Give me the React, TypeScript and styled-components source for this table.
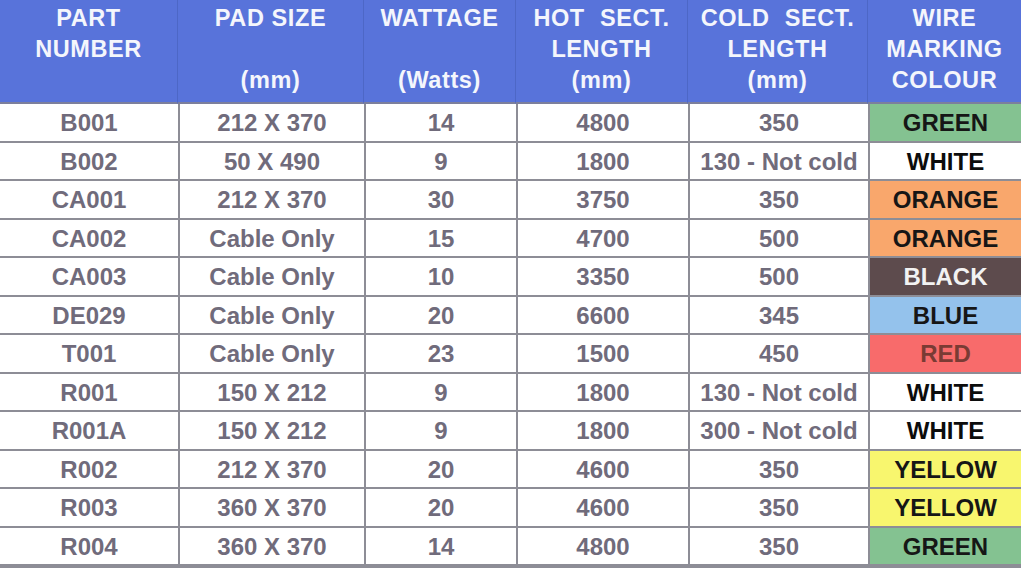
import React from "react";
import styled, { createGlobalStyle } from "styled-components";

const GlobalStyle = createGlobalStyle`
  html, body {
    margin: 0;
    padding: 0;
    background: #ffffff;
  }
  body {
    font-family: "Liberation Sans", Arial, sans-serif;
  }
`;

type WireColour = "GREEN" | "WHITE" | "ORANGE" | "BLACK" | "BLUE" | "RED" | "YELLOW";

type Row = {
  part: string;
  pad: string;
  watts: string;
  hot: string;
  cold: string;
  colour: WireColour;
};

const swatches: Record<WireColour, { bg: string; fg: string }> = {
  GREEN: { bg: "#84c291", fg: "#161616" },
  WHITE: { bg: "#ffffff", fg: "#0c0c0c" },
  ORANGE: { bg: "#f9a76c", fg: "#161616" },
  BLACK: { bg: "#5d4b4d", fg: "#f2f2f2" },
  BLUE: { bg: "#94c2ec", fg: "#161616" },
  RED: { bg: "#f86b6b", fg: "#7a3b34" },
  YELLOW: { bg: "#f8f66e", fg: "#161616" },
};

const rows: Row[] = [
  { part: "B001", pad: "212 X 370", watts: "14", hot: "4800", cold: "350", colour: "GREEN" },
  { part: "B002", pad: "50 X 490", watts: "9", hot: "1800", cold: "130 - Not cold", colour: "WHITE" },
  { part: "CA001", pad: "212 X 370", watts: "30", hot: "3750", cold: "350", colour: "ORANGE" },
  { part: "CA002", pad: "Cable Only", watts: "15", hot: "4700", cold: "500", colour: "ORANGE" },
  { part: "CA003", pad: "Cable Only", watts: "10", hot: "3350", cold: "500", colour: "BLACK" },
  { part: "DE029", pad: "Cable Only", watts: "20", hot: "6600", cold: "345", colour: "BLUE" },
  { part: "T001", pad: "Cable Only", watts: "23", hot: "1500", cold: "450", colour: "RED" },
  { part: "R001", pad: "150 X 212", watts: "9", hot: "1800", cold: "130 - Not cold", colour: "WHITE" },
  { part: "R001A", pad: "150 X 212", watts: "9", hot: "1800", cold: "300 - Not cold", colour: "WHITE" },
  { part: "R002", pad: "212 X 370", watts: "20", hot: "4600", cold: "350", colour: "YELLOW" },
  { part: "R003", pad: "360 X 370", watts: "20", hot: "4600", cold: "350", colour: "YELLOW" },
  { part: "R004", pad: "360 X 370", watts: "14", hot: "4800", cold: "350", colour: "GREEN" },
];

const columns = [178, 186, 152, 172, 180, 153];

const Sheet = styled.div`
  width: 1021px;
  display: grid;
  grid-template-columns: ${columns.map((c) => `${c}px`).join(" ")};
  grid-template-rows: 104px;
  grid-auto-rows: 38.5px;
  border-right: 2px solid #8d8d96;
  border-bottom: 2px solid #8d8d96;
  box-sizing: border-box;
`;

const HeadCell = styled.div<{ $last?: boolean; $wide?: boolean }>`
  background: #5873da;
  color: #f4f6fc;
  font-weight: bold;
  font-size: 23.5px;
  line-height: 31px;
  letter-spacing: 0.6px;
  word-spacing: ${(p) => (p.$wide ? "8px" : "0")};
  text-align: center;
  padding-top: 3px;
  box-sizing: border-box;
  border-right: ${(p) => (p.$last ? "none" : "1px solid #4d67c6")};
  border-bottom: 2px solid #7c7f9c;
`;

const Cell = styled.div<{ $bg?: string; $fg?: string; $first?: boolean }>`
  display: flex;
  align-items: center;
  justify-content: center;
  background: ${(p) => p.$bg ?? "#ffffff"};
  color: ${(p) => p.$fg ?? "#706b7b"};
  font-weight: bold;
  font-size: 24px;
  box-sizing: border-box;
  border-left: ${(p) => (p.$first ? "none" : "2px solid #8d8d96")};
  border-bottom: 2px solid #8d8d96;
  padding-top: 2px;
`;

export default function App() {
  return (
    <>
      <GlobalStyle />
      <Sheet>
        <HeadCell>PART<br />NUMBER</HeadCell>
        <HeadCell>PAD SIZE<br /><br />(mm)</HeadCell>
        <HeadCell>WATTAGE<br /><br />(Watts)</HeadCell>
        <HeadCell $wide>HOT SECT.<br />LENGTH<br />(mm)</HeadCell>
        <HeadCell $wide>COLD SECT.<br />LENGTH<br />(mm)</HeadCell>
        <HeadCell $last>WIRE<br />MARKING<br />COLOUR</HeadCell>
        {rows.map((r) => {
          const sw = swatches[r.colour];
          return (
            <React.Fragment key={r.part}>
              <Cell $first>{r.part}</Cell>
              <Cell>{r.pad}</Cell>
              <Cell>{r.watts}</Cell>
              <Cell>{r.hot}</Cell>
              <Cell>{r.cold}</Cell>
              <Cell $bg={sw.bg} $fg={sw.fg}>{r.colour}</Cell>
            </React.Fragment>
          );
        })}
      </Sheet>
    </>
  );
}
